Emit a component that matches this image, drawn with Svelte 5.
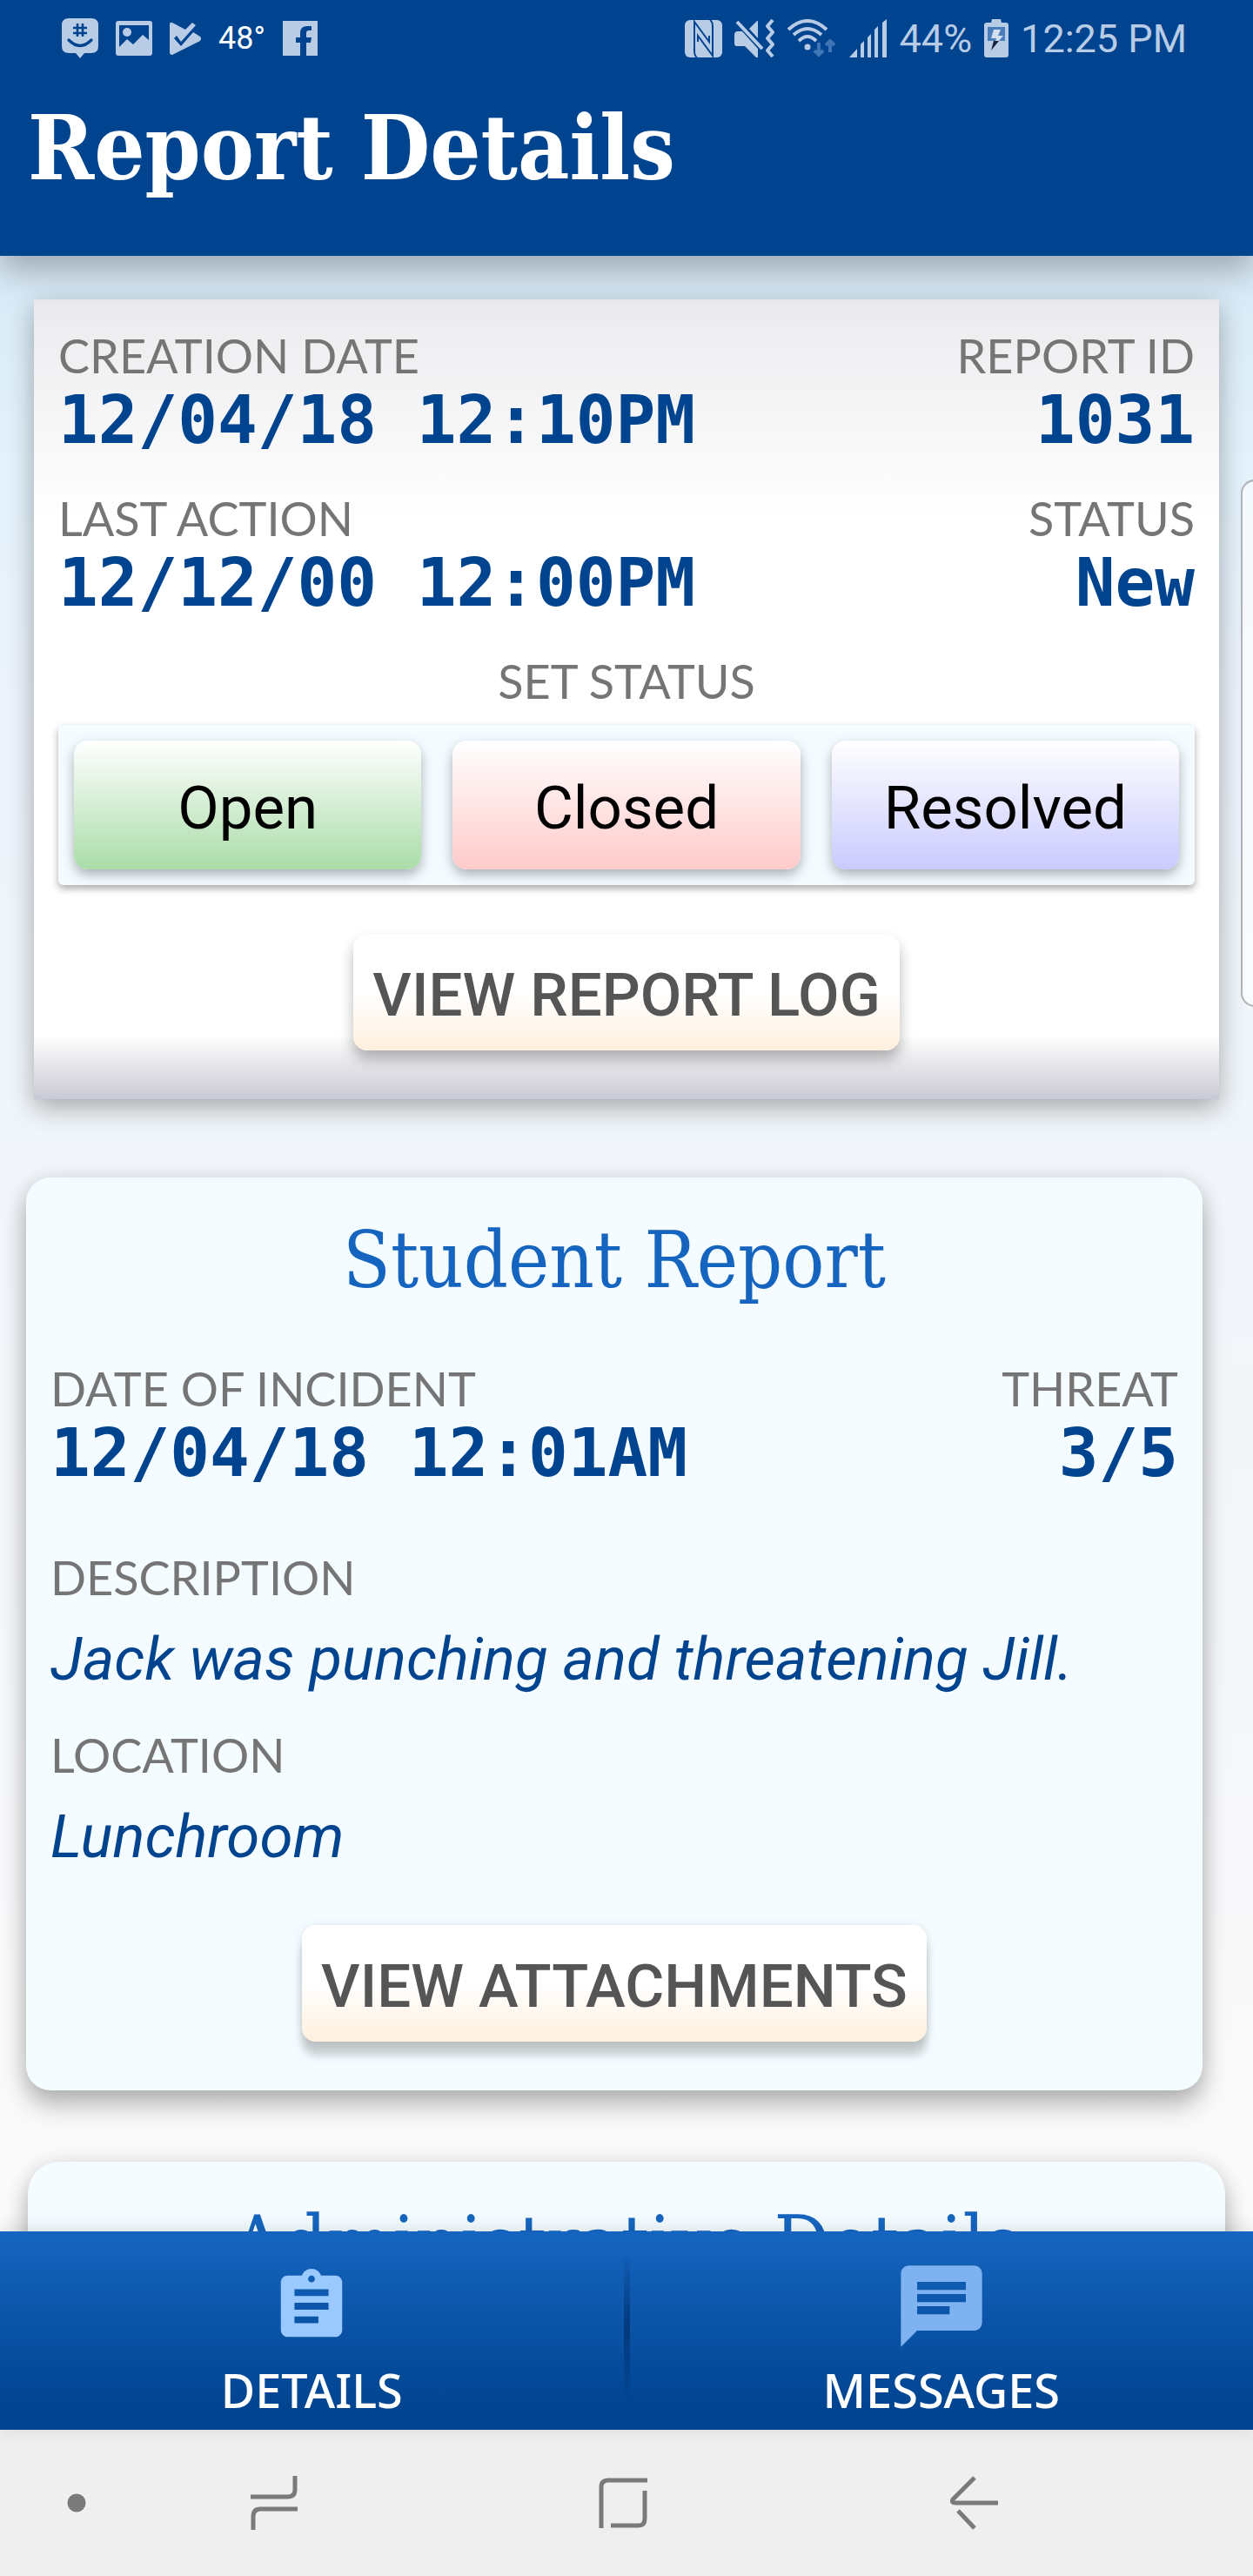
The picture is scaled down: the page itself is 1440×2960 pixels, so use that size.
<script>
  const statuses = [
    { name: 'Open', tone: 'green' },
    { name: 'Closed', tone: 'red' },
    { name: 'Resolved', tone: 'violet' }
  ];
</script>

<div class="app">
  <header class="header">
    <div class="status-bar">
      <div class="notices">
        <svg width="42" height="46" viewBox="0 0 42 46" aria-hidden="true">
          <path fill="#b9cce5" d="M8 0h26q8 0 8 8v24q0 8-8 8h-8l-5 6-5-6H8q-8 0-8-8V8q0-8 8-8z" />
          <path fill="none" stroke="#00438f" stroke-width="2.6" d="M18 6v15M24 6v15M13 11h16M13 17h16" />
          <path fill="none" stroke="#00438f" stroke-width="3.2" stroke-linecap="round" d="M8 25q13 13 26 0" />
        </svg>
        <svg width="42" height="40" viewBox="0 0 42 40" aria-hidden="true">
          <path fill="#b9cce5" fill-rule="evenodd" d="M3 0h36q3 0 3 3v34q0 3-3 3H3q-3 0-3-3V3q0-3 3-3zM4 5v25l9-9 7 6 11-11 7 6V5z" />
          <circle cx="13" cy="13" r="5" fill="#b9cce5" />
        </svg>
        <svg width="36" height="38" viewBox="0 0 36 38" aria-hidden="true">
          <path fill="#b9cce5" d="M0 3q0-3 3-2l15 8 8-8 4 3-17 19-5-7-3 3 8 9 14-16 8 5q2 2 0 5L3 38q-3 0-3-3z" />
        </svg>
        <span class="temperature">48°</span>
        <svg width="40" height="40" viewBox="0 0 40 40" aria-hidden="true">
          <path fill="#b9cce5" d="M0 0h40v40H27V25h5l1-6h-6v-5q0-3 3-3h3V6h-5q-8 0-8 8v5h-5v6h5v15H0z" />
        </svg>
      </div>
      <div class="system">
        <svg width="43" height="43" viewBox="0 0 43 43" aria-hidden="true">
          <rect width="43" height="43" rx="6" fill="#b9cce5" />
          <path fill="none" stroke="#00438f" stroke-width="2" d="M14 43q-3-2-3-7V2l17 23V18M29 0q3 2 3 7v34L15 18v7" />
        </svg>
        <svg width="46" height="44" viewBox="0 0 46 44" aria-hidden="true">
          <path fill="#b9cce5" d="M0 18q0-4 4-4h5l18 20v10h-2L12 31H3q-3 0-3-3zM17 11l9-9h1v20z" />
          <path fill="none" stroke="#b9cce5" stroke-width="4" d="M3 3l29 31" />
          <path fill="none" stroke="#b9cce5" stroke-width="4" stroke-linejoin="round" d="M44 1l-6 7 6 7-6 7 6 7-6 7 6 7" />
        </svg>
        <svg width="58" height="44" viewBox="0 0 58 44" aria-hidden="true">
          <g fill="none" stroke="#b9cce5" stroke-width="4">
            <path d="M2 12Q24-8 46 12" />
            <path d="M8 18q16-14 32 0" />
            <path d="M14 25q10-10 20 0" />
          </g>
          <circle cx="24" cy="32" r="3.500" fill="#b9cce5" />
          <path fill="none" stroke="#3f76b5" stroke-width="4" d="M37 27v14M32 36l5 5 5-5M50 38V25M45 30l5-5 5 5" />
        </svg>
        <svg width="44" height="44" viewBox="0 0 44 44" aria-hidden="true">
          <path fill="#b9cce5" d="M0 44l9-10v10zM13 44V29l4-4v19zM21 44V21l4-4v27zM29 44V12l4-4v36zM38 44V4l5-4v44z" />
        </svg>
        <span>44%</span>
        <svg width="28" height="44" viewBox="0 0 28 44" aria-hidden="true">
          <path fill="#b9cce5" d="M9 0h10l1 4h5q3 0 3 3v34q0 3-3 3H3q-3 0-3-3V7q0-3 3-3h5z" />
          <path fill="#4a7dbb" d="M4 9h20v16H4z" />
          <path fill="#d3dfef" d="M11 12h8l-3 7h6l-6 7h-3l1-4H8z" />
          <path fill="#17233a" d="M11 25h6L8 36z" />
        </svg>
        <span>12:25 PM</span>
      </div>
    </div>
    <h1>Report Details</h1>
  </header>

  <main class="content">
    <section class="card summary">
      <dl class="fields">
        <div class="field">
          <dt>CREATION DATE</dt>
          <dd>12/04/18 12:10PM</dd>
        </div>
        <div class="field end">
          <dt>REPORT ID</dt>
          <dd>1031</dd>
        </div>
        <div class="field">
          <dt>LAST ACTION</dt>
          <dd>12/12/00 12:00PM</dd>
        </div>
        <div class="field end">
          <dt>STATUS</dt>
          <dd>New</dd>
        </div>
      </dl>
      <p class="caption" id="set-status">SET STATUS</p>
      <div class="tray" role="group" aria-labelledby="set-status">
        {#each statuses as status}
          <button type="button" class="choice {status.tone}">{status.name}</button>
        {/each}
      </div>
      <button type="button" class="action">VIEW REPORT LOG</button>
    </section>

    <section class="card student">
      <h2>Student Report</h2>
      <dl class="fields">
        <div class="field">
          <dt>DATE OF INCIDENT</dt>
          <dd>12/04/18 12:01AM</dd>
        </div>
        <div class="field end">
          <dt>THREAT</dt>
          <dd>3/5</dd>
        </div>
      </dl>
      <dl class="notes">
        <div class="field">
          <dt>DESCRIPTION</dt>
          <dd>Jack was punching and threatening Jill.</dd>
        </div>
        <div class="field">
          <dt>LOCATION</dt>
          <dd>Lunchroom</dd>
        </div>
      </dl>
      <button type="button" class="action raised">VIEW ATTACHMENTS</button>
    </section>

    <section class="card administrative">
      <h2>Administrative Details</h2>
    </section>
  </main>

  <nav class="tabs" aria-label="Report sections">
    <a href="#details" class="tab" aria-current="page">
      <span class="tab-icon">
        <svg width="94" height="94" viewBox="0 0 24 24" aria-hidden="true">
          <path fill="#99c9ff" d="M19 3h-4.180C14.400 1.840 13.300 1 12 1c-1.300 0-2.400.84-2.820 2H5c-1.100 0-2 .9-2 2v14c0 1.100.9 2 2 2h14c1.100 0 2-.9 2-2V5c0-1.100-.9-2-2-2zm-7 0c.55 0 1 .45 1 1s-.45 1-1 1-1-.45-1-1 .45-1 1-1zm2 14H7v-2h7v2zm3-4H7v-2h10v2zm0-4H7V7h10v2z" />
        </svg>
      </span>
      DETAILS
    </a>
    <span class="divider"></span>
    <a href="#messages" class="tab">
      <span class="tab-icon">
        <svg width="112" height="112" viewBox="0 0 24 24" aria-hidden="true">
          <path fill="#7fb2f0" d="M20 2H4c-1.100 0-1.990.9-1.990 2L2 22l4-4h14c1.100 0 2-.9 2-2V4c0-1.100-.9-2-2-2zM6 9h12v2H6V9zm8 5H6v-2h8v2zm4-6H6V6h12v2z" />
        </svg>
      </span>
      MESSAGES
    </a>
  </nav>

  <div class="system-nav">
    <button type="button" aria-label="Toggle navigation bar">
      <svg width="22" height="22" viewBox="0 0 22 22"><circle cx="11" cy="11" r="10.500" fill="#7a7a7a" /></svg>
    </button>
    <button type="button" aria-label="Recent apps">
      <svg width="56" height="62" viewBox="0 0 56 62">
        <path fill="none" stroke="#7a7a7a" stroke-width="5" d="M1 24h42q9 0 9-8V0M55 38H12q-8 0-8 9v15" />
      </svg>
    </button>
    <button type="button" aria-label="Home">
      <svg width="56" height="58" viewBox="0 0 56 58">
        <path fill="none" stroke="#7a7a7a" stroke-width="5" d="M3 58V11q0-8 8-8h45M14 55h32q7 0 7-8V15" />
      </svg>
    </button>
    <button type="button" aria-label="Back">
      <svg width="56" height="62" viewBox="0 0 56 62">
        <path fill="none" stroke="#7a7a7a" stroke-width="5" d="M28 2L3 27q-2 4 3 4h49M9 40l19 20" />
      </svg>
    </button>
  </div>

  <div class="edge-handle"></div>
</div>

<style>
  :global(body) {
    margin: 0;
  }

  .app {
    position: relative;
    display: flex;
    flex-direction: column;
    height: 100vh;
    overflow: hidden;
    background: #f4f7fa;
    font-family: Roboto, sans-serif;
  }

  h1,
  h2,
  p,
  dl,
  dd {
    margin: 0;
  }

  button {
    border: 0;
    font-family: inherit;
  }

  .header {
    position: relative;
    z-index: 1;
    flex: none;
    background: #00438f;
    box-shadow: 0 16px 32px rgba(0, 0, 0, 0.22), 0 24px 60px rgba(0, 0, 0, 0.08);
  }

  .status-bar {
    display: flex;
    justify-content: space-between;
    align-items: center;
    height: 88px;
    padding: 0 76px 0 71px;
    color: #b9cce5;
    font-size: 45px;
  }

  .notices,
  .system {
    display: flex;
    align-items: center;
  }

  .notices {
    gap: 20px;
  }

  .system {
    gap: 14px;
  }

  .temperature {
    color: #fff;
    font-size: 36px;
  }

  h1 {
    padding: 22px 32px 64px;
    color: #fff;
    font: bold 102px/120px "DejaVu Serif Condensed", "DejaVu Serif", serif;
  }

  .content {
    flex: 1;
    min-height: 0;
    overflow-y: auto;
    scrollbar-width: none;
    background: linear-gradient(#d9ebf8, #e2f1fa 10%, #edf3fc 24%, #f0f6fa 40%, #f3f5f9 60%, #fafafa 96%);
  }

  .card {
    display: flex;
    flex-direction: column;
    align-items: stretch;
    box-sizing: border-box;
    padding: 0 28px 56px;
    background: #f4fcff;
  }

  .summary {
    margin: 50px 39px 90px;
    padding-top: 31px;
    background: linear-gradient(#ebebee, #fff 28%, #fff 92%, #e4e3e8 96%, #cacad6);
    box-shadow: 0 10px 28px rgba(0, 0, 0, 0.32);
  }

  .student {
    margin: 0 58px 82px 30px;
    padding-top: 43px;
    border-radius: 28px;
    box-shadow: 0 18px 28px rgba(0, 0, 0, 0.24), 0 2px 24px rgba(0, 0, 0, 0.12);
  }

  .administrative {
    margin: 0 32px 82px;
    padding-top: 43px;
    border-radius: 36px;
    box-shadow: 0 18px 28px rgba(0, 0, 0, 0.24), 0 2px 24px rgba(0, 0, 0, 0.12);
  }

  h2 {
    color: #1565c0;
    font: 89px/104px "DejaVu Serif Condensed", "DejaVu Serif", serif;
    text-align: center;
  }

  .fields {
    display: grid;
    grid-template-columns: auto auto;
    justify-content: space-between;
    row-gap: 39px;
  }

  .student .fields {
    margin: 62px 0 69px;
  }

  dt,
  .caption {
    color: #757575;
    font: 54px/68px Lato, sans-serif;
  }

  .caption {
    margin: 39px 0 16px;
    text-align: center;
  }

  .end {
    text-align: right;
  }

  dd {
    color: #00438f;
    font: bold 76px/80px "DejaVu Sans Mono", monospace;
  }

  .notes {
    display: grid;
    row-gap: 16px;
    margin-bottom: 41px;
  }

  .notes dd {
    font: italic 69px/120px Roboto, sans-serif;
  }

  .tray {
    display: grid;
    grid-template-columns: repeat(3, 1fr);
    gap: 36px;
    margin-bottom: 56px;
    padding: 18px;
    border-radius: 6px;
    background: #f4fcff;
    box-shadow: 0 4px 8px rgba(0, 0, 0, 0.34);
  }

  .choice {
    height: 148px;
    padding: 6px 0 0;
    border-radius: 16px;
    color: #000;
    font-size: 69px;
    box-shadow: 0 6px 14px rgba(0, 0, 0, 0.3);
  }

  .green {
    background: linear-gradient(#fff, #aadda8);
  }

  .red {
    background: linear-gradient(#fff, #ffcaca);
  }

  .violet {
    background: linear-gradient(#fff, #cacaff);
  }

  .action {
    align-self: center;
    height: 134px;
    padding: 6px 22px 0;
    border-radius: 16px;
    background: linear-gradient(#fff 50%, #fff0de);
    color: #555;
    font-size: 69px;
    font-weight: 500;
    box-shadow: 0 10px 16px rgba(0, 0, 0, 0.28);
  }

  .raised {
    box-shadow: 0 16px 10px rgba(0, 0, 0, 0.18), 0 2px 12px rgba(0, 0, 0, 0.12);
  }

  .tabs {
    position: relative;
    display: flex;
    flex: none;
    background: linear-gradient(#1565c0, #00438f 92%);
    box-shadow: 0 -2px 20px rgba(0, 0, 0, 0.12);
  }

  .tab {
    display: flex;
    flex: 1;
    flex-direction: column;
    align-items: center;
    gap: 10px;
    padding: 30px 0 16px;
    color: #fff;
    font: 500 54px/60px "Noto Sans", sans-serif;
    text-decoration: none;
  }

  .tab-icon {
    display: flex;
    align-items: center;
    height: 112px;
  }

  .divider {
    width: 7px;
    margin: 26px 0;
    background: linear-gradient(rgba(0, 50, 115, 0), rgba(0, 50, 115, 0.8) 50%, rgba(0, 50, 115, 0));
  }

  .system-nav {
    display: grid;
    flex: none;
    grid-template-columns: 176fr 278fr 524fr 284fr 178fr;
    height: 168px;
    background: #efefef;
  }

  .system-nav button {
    display: flex;
    align-items: center;
    justify-content: center;
    padding: 0;
    background: none;
  }

  .edge-handle {
    position: absolute;
    top: 551px;
    right: -20px;
    width: 30px;
    height: 602px;
    border: 2px solid #b0b4b8;
    border-radius: 16px;
    background: rgba(255, 255, 255, 0.6);
  }
</style>
